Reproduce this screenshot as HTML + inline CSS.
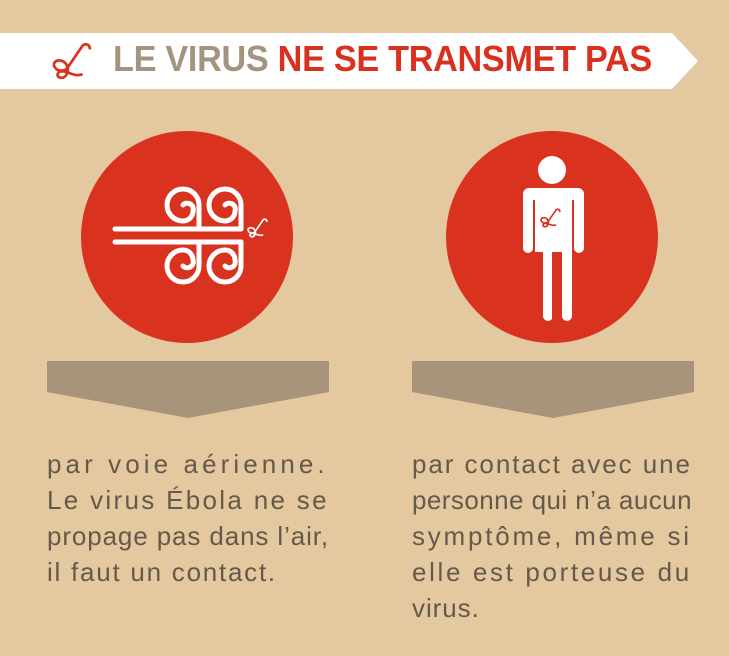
<!DOCTYPE html>
<html><head><meta charset="utf-8"><style>
html,body{margin:0;padding:0}
body{width:729px;height:656px;background:#e4c89f;position:relative;overflow:hidden;font-family:"Liberation Sans",sans-serif}
.t{position:absolute;font-size:26px;color:#65594b;line-height:36px}
.t div{white-space:nowrap;display:block}
.t span{display:inline-block;white-space:nowrap}
#title{position:absolute;left:113px;top:38px;font-size:36px;font-weight:bold;white-space:nowrap;transform-origin:0 0;transform:scaleX(0.95);letter-spacing:-0.3px}
</style></head><body>
<svg width="729" height="656" style="position:absolute;left:0;top:0">
<defs>
<path id="v" d="M38,6 C37,1 32,1 30,5 L17,24 C14,29 6,28 4,23 C2,17 12,15 16,22 C19,28 15,35 10,34 C5,33 7,27 13,28 C19,29 24,33 30,31"/>
</defs>
<polygon points="0,33 672,33 698,61 672,89 0,89" fill="#fff"/>
<circle cx="187" cy="237" r="106" fill="#d93320"/>
<circle cx="552" cy="237" r="106" fill="#d93320"/>
<polygon points="47,361 329,361 329,392 188,418 47,392" fill="#a8947a"/>
<polygon points="412,361 694,361 694,392 553,418 412,392" fill="#a8947a"/>
<g fill="none" stroke="#fff" stroke-width="5" stroke-linecap="round">
<line x1="115" y1="229" x2="241" y2="229"/>
<line x1="115" y1="242" x2="241" y2="242"/>
<path d="M199,229 L199,205 A16,16 0 0 0 167,205 A16,16 0 0 0 183,221 A10,10 0 0 0 193,211 A6,6 0 0 0 183,205"/>
<path d="M241,229 L241,205 A16,16 0 0 0 209,205 A16,16 0 0 0 225,221 A10,10 0 0 0 235,211 A6,6 0 0 0 225,205"/>
<path d="M199,242 L199,266 A16,16 0 0 1 167,266 A16,16 0 0 1 183,250 A10,10 0 0 1 193,260 A6,6 0 0 1 183,266"/>
<path d="M241,242 L241,266 A16,16 0 0 1 209,266 A16,16 0 0 1 225,250 A10,10 0 0 1 235,260 A6,6 0 0 1 225,266"/>
</g>
<g fill="#fff">
<circle cx="552" cy="170" r="14"/>
<path d="M528,188 H578 A6,6 0 0 1 584,194 V248 A5,5 0 0 1 574,248 V200 H572 V316 A5,5 0 0 1 562,316 V252 H553 V316 A5,5 0 0 1 543,316 V252 H535 V200 H533 V248 A5,5 0 0 1 523,248 V194 A6,6 0 0 1 528,188Z"/>
</g>
<rect x="552" y="252" width="2" height="70" fill="#d93320"/>
<use href="#v" transform="translate(50,42) scale(1.05)" fill="none" stroke="#d93320" stroke-width="2.6" stroke-linecap="round"/>
<use href="#v" transform="translate(246,218) scale(0.55)" fill="none" stroke="#fff" stroke-width="3" stroke-linecap="round"/>
<use href="#v" transform="translate(539,208) scale(0.55)" fill="none" stroke="#d93320" stroke-width="3" stroke-linecap="round"/>
</svg>
<div id="title"><span style="color:#a39480">LE VIRUS </span><span style="color:#d9311f">NE SE TRANSMET PAS</span></div>
<div class="t" style="left:47px;top:446px;width:282px">
<div><span class="j" data-w="282">par voie aérienne.</span></div>
<div><span class="j" data-w="282">Le virus Ébola ne se</span></div>
<div><span class="j" data-w="282">propage pas dans l’air,</span></div>
<div><span class="j" data-w="230">il faut un contact.</span></div>
</div>
<div class="t" style="left:412px;top:446px;width:280px">
<div><span class="j" data-w="280">par contact avec une</span></div>
<div><span class="j" data-w="280">personne qui n’a aucun</span></div>
<div><span class="j" data-w="280">symptôme, même si</span></div>
<div><span class="j" data-w="280">elle est porteuse du</span></div>
<div><span class="j" data-w="68">virus.</span></div>
</div>
<script>
document.querySelectorAll('.j').forEach(function(s){
  var W=+s.getAttribute('data-w');
  var n=s.textContent.length-1;
  var w=s.getBoundingClientRect().width;
  var ls=(W-w)/n;
  s.style.letterSpacing=ls+'px';
  var w2=s.getBoundingClientRect().width;
  s.style.letterSpacing=(ls+(W-w2)/n)+'px';
});
</script>
</body></html>
